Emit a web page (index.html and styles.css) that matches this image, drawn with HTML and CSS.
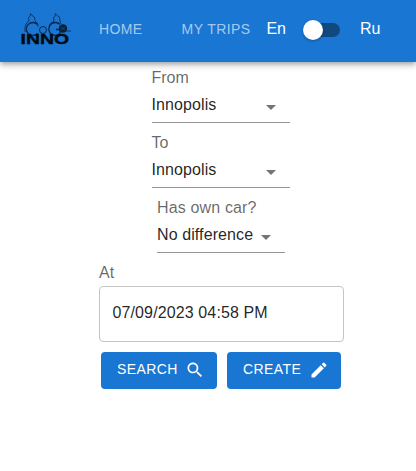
FILE: index.html
```html
<!DOCTYPE html>
<html lang="en">
<head>
<meta charset="utf-8">
<title>InnoCoGo</title>
<link rel="stylesheet" href="styles.css">
</head>
<body>
<header class="bar">
  <svg class="logo" width="52" height="34" viewBox="0 0 52 34">
    <g fill="none" stroke="#08274a" stroke-width=".8">
      <path d="M8 8 7.500 4.500 9 3.500 9.500 .5 11 2.500 13.500 4 14 7.500M33 8 32.500 4.500 34 3.500 34.500 .5 36 2.500 38.500 4 39 8L40 11"/>
      <path stroke-width="1.300" d="M16.500 11.500A6.500 6.500 0 1 0 16.500 20.500M39 11.500A6.500 6.500 0 1 0 39 20.500V16.500H35"/>
      <path d="M8 8Q3 11 4 19M14 8Q18 10 17 14M33 8Q28 10 28 14"/>
      <circle cx="22" cy="17" r="3.500" stroke-width="1"/>
      <path d="M45 18 50 18"/>
    </g>
    <circle cx="42" cy="15.500" r="4.200" fill="#08213a"/>
    <path d="m40 14 4 3M40 17l4-3" stroke="#1976d2" stroke-width=".4"/>
    <text class="logo-text" x="-.5" y="31" textLength="48.500" lengthAdjust="spacingAndGlyphs">INNO</text>
  </svg>
  <nav class="nav"><a>HOME</a><a>MY TRIPS</a></nav>
  <div class="lang"><span>En</span><span class="switch"><span class="thumb"></span></span><span>Ru</span></div>
</header>
<main class="form">
  <div class="field">
    <label>From</label>
    <div class="select"><span>Innopolis</span><i class="arrow"></i></div>
  </div>
  <div class="field">
    <label>To</label>
    <div class="select"><span>Innopolis</span><i class="arrow"></i></div>
  </div>
  <div class="field narrow">
    <label>Has own car?</label>
    <div class="select"><span>No difference</span><i class="arrow"></i></div>
  </div>
  <div class="field date">
    <label>At</label>
    <div class="input">07/09/2023 04:58 PM</div>
  </div>
  <div class="actions">
    <button class="btn search">SEARCH
      <svg width="20" height="20" viewBox="0 0 24 24"><path d="M15.5 14h-.79l-.28-.27C15.41 12.59 16 11.11 16 9.5 16 5.91 13.09 3 9.5 3S3 5.91 3 9.5 5.91 16 9.5 16c1.61 0 3.09-.59 4.23-1.57l.27.28v.79l5 4.99L20.49 19l-4.99-5zm-6 0C7.01 14 5 11.99 5 9.5S7.01 5 9.5 5 14 7.01 14 9.5 11.99 14 9.5 14z"/></svg>
    </button>
    <button class="btn create">CREATE
      <svg width="20" height="20" viewBox="0 0 24 24"><path d="M3 17.25V21h3.75L17.81 9.94l-3.75-3.75L3 17.25zM20.71 7.04c.39-.39.39-1.02 0-1.41l-2.34-2.34a.9959.9959 0 0 0-1.41 0l-1.83 1.83 3.75 3.75 1.83-1.83z"/></svg>
    </button>
  </div>
</main>
</body>
</html>
```
FILE: styles.css
```css
* { box-sizing: border-box; }
body {
  margin: 0;
  background: #fff;
  color: rgba(0, 0, 0, .87);
  font: 16px/23px "Liberation Sans", Arial, sans-serif;
  overflow: hidden;
}
.bar {
  display: flex;
  height: 62px;
  padding-left: 21px;
  background: #1976d2;
  color: #fff;
  box-shadow: 0 2px 4px -1px rgba(0,0,0,.2), 0 4px 5px rgba(0,0,0,.14), 0 1px 10px rgba(0,0,0,.12);
}
.logo { flex: none; margin-top: 13px; overflow: visible; }
.logo-text {
  font: bold 14px "Liberation Sans", Arial, sans-serif;
  fill: #020b14;
  stroke: #020b14;
  stroke-width: .4px;
}
.nav {
  display: flex;
  gap: 39px;
  margin: 18px 0 0 26px;
  font-size: 14px;
  letter-spacing: .4px;
  color: rgba(255, 255, 255, .62);
  white-space: nowrap;
}
.lang { display: flex; margin: 17px 0 0 16px; }
.switch {
  width: 34px;
  height: 14px;
  margin: 6px 20px 0 20px;
  border-radius: 7px;
  background: #11497f;
}
.thumb {
  display: block;
  width: 20px;
  height: 20px;
  margin: -3px 0 0 -3px;
  border-radius: 50%;
  background: #fff;
  box-shadow: 0 1px 3px rgba(0, 0, 0, .3);
}
.form {
  display: flex;
  flex-direction: column;
  align-items: center;
  width: 243px;
  margin: 4px 0 0 99px;
}
.field { width: 138px; height: 65px; }
.field label { display: block; color: rgba(0, 0, 0, .6); }
.select {
  display: flex;
  align-items: center;
  justify-content: space-between;
  height: 34px;
  padding: 1px 14px 3px 0;
  border-bottom: 1px solid #949494;
  letter-spacing: .1px;
}
.select span { overflow: hidden; white-space: nowrap; }
.arrow {
  flex: none;
  margin-top: 5px;
  border: 5px solid transparent;
  border-top-color: #757575;
  border-bottom: 0;
}
.narrow { width: 128px; }
.narrow label { padding-left: .5px; letter-spacing: .15px; }
.narrow .select span { width: 96px; padding-left: .5px; letter-spacing: .1px; }
.date { align-self: flex-start; width: 245px; height: 81px; }
.input {
  width: 245px;
  height: 56px;
  margin-top: 2px;
  padding: 14px 12.5px;
  border: 1px solid #c4c4c4;
  border-radius: 4px;
  letter-spacing: .12px;
}
.actions { display: flex; gap: 10px; margin-top: 10px; }
.btn {
  display: flex;
  align-items: center;
  justify-content: space-between;
  height: 37px;
  padding: 0 12px 3px 16.5px;
  border: 0;
  border-radius: 4px;
  background: #1976d2;
  color: #fff;
  font: 14px "Liberation Sans", Arial, sans-serif;
  letter-spacing: .4px;
}
.btn svg { fill: #fff; margin-top: 2px; }
.search { width: 116px; }
.create { width: 114px; }
```
